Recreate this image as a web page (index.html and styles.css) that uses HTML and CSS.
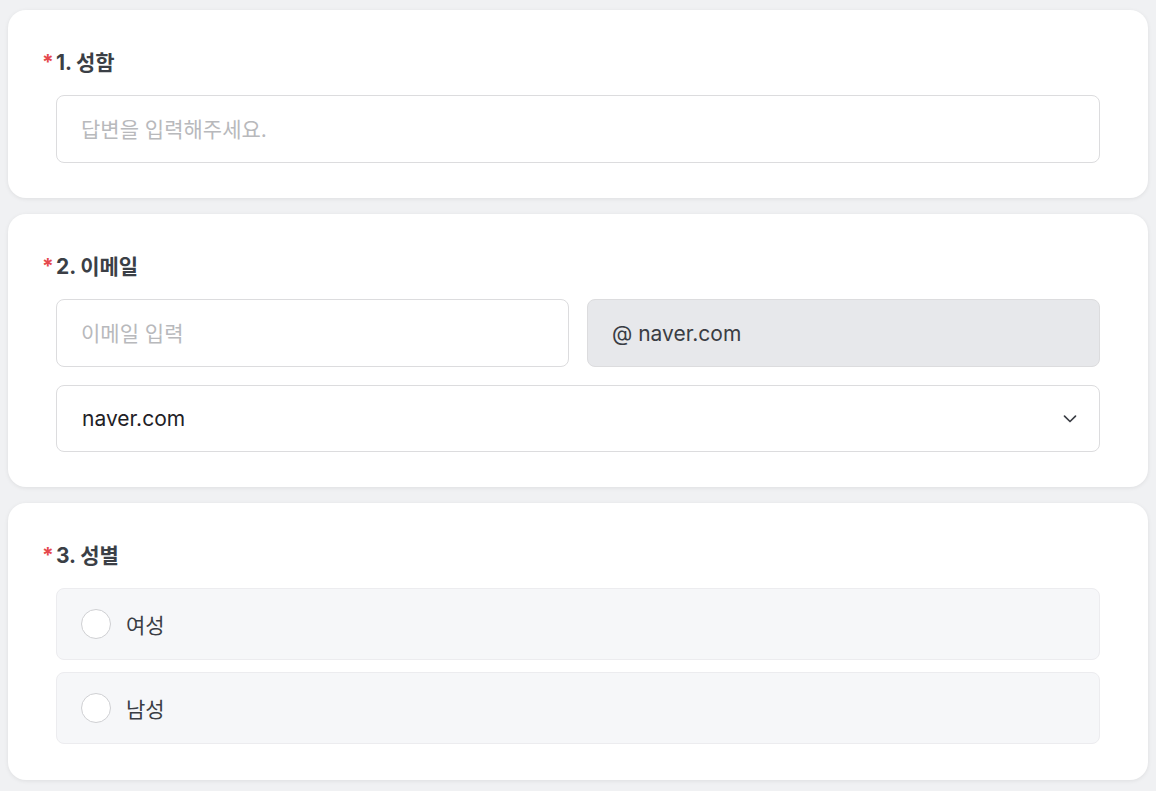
FILE: index.html
```html
<!DOCTYPE html>
<html lang="ko">
<head>
<meta charset="utf-8">
<title>설문</title>
<link rel="stylesheet" href="styles.css">
</head>
<body>
<main class="form">
  <section class="card">
    <h2 class="q-title"><span class="req">*</span>1. 성함</h2>
    <div class="field">
      <input class="input" type="text" placeholder="답변을 입력해주세요.">
    </div>
  </section>

  <section class="card">
    <h2 class="q-title"><span class="req">*</span>2. 이메일</h2>
    <div class="field email-row">
      <input class="input" type="text" placeholder="이메일 입력">
      <div class="input readonly">@ naver.com</div>
    </div>
    <div class="field select">
      <span class="select-value">naver.com</span>
      <svg class="chev" width="14" height="14" viewBox="0 0 14 14" fill="none"><path d="M1.5 4.2l5.5 5.3 5.5-5.3" stroke="#3a3d44" stroke-width="1.7" stroke-linecap="round" stroke-linejoin="round"/></svg>
    </div>
  </section>

  <section class="card">
    <h2 class="q-title"><span class="req">*</span>3. 성별</h2>
    <div class="options">
      <label class="option"><span class="radio"></span><span class="opt-text">여성</span></label>
      <label class="option"><span class="radio"></span><span class="opt-text">남성</span></label>
    </div>
  </section>
</main>
</body>
</html>
```

FILE: styles.css
```css
* { box-sizing: border-box; }
html, body { margin: 0; padding: 0; }
body {
  background: #f0f1f3;
  font-family: Inter, "Noto Sans CJK KR", sans-serif;
  color: #3a3d44;
}
.form {
  display: flex;
  flex-direction: column;
  gap: 16px;
  padding: 10px 8px 10px 8px;
}
.card {
  background: #ffffff;
  border-radius: 18px;
  box-shadow: 0 1px 4px rgba(0,0,0,0.08);
  padding: 40px 48px 35px 48px;
}
.q-title {
  margin: 0 0 23px -14px;
  height: 22px;
  display: flex;
  align-items: center;
  font-size: 21px;
  font-weight: 700;
  color: #3b3f46;
  letter-spacing: -0.1px;
}
.req {
  color: #e5484d;
  font-size: 21px;
  width: 14px;
  margin-top: 2px;
  line-height: 1;
}
.field { width: 100%; }
.input {
  display: flex;
  align-items: center;
  width: 100%;
  height: 68px;
  border: 1px solid #dcdcde;
  border-radius: 8px;
  padding: 0 24px;
  font-family: inherit;
  font-size: 21px;
  color: #3a3d44;
  background: #fff;
  outline: none;
}
.input::placeholder { color: #b8b9bc; }
.email-row {
  display: grid;
  grid-template-columns: 1fr 1fr;
  gap: 18px;
}
.readonly {
  background: #e7e8eb;
  color: #3a3d44;
}
.select {
  margin-top: 18px;
  height: 67px;
  border: 1px solid #dcdcde;
  border-radius: 8px;
  display: flex;
  align-items: center;
  justify-content: space-between;
  padding: 0 22px 0 25px;
  font-size: 21px;
  color: #1f2126;
}
.chev { display: block; }
.options {
  display: flex;
  flex-direction: column;
  gap: 12px;
  margin: 2px 0 1px 0;
}
.option {
  height: 72px;
  background: #f6f7f9;
  border: 1px solid #ececef;
  border-radius: 8px;
  display: flex;
  align-items: center;
  padding-left: 24px;
  gap: 15px;
}
.radio {
  width: 30px;
  height: 30px;
  border-radius: 50%;
  border: 1px solid #cfd0d3;
  background: #fff;
}
.opt-text {
  font-size: 21px;
  color: #3a3d44;
}
```
